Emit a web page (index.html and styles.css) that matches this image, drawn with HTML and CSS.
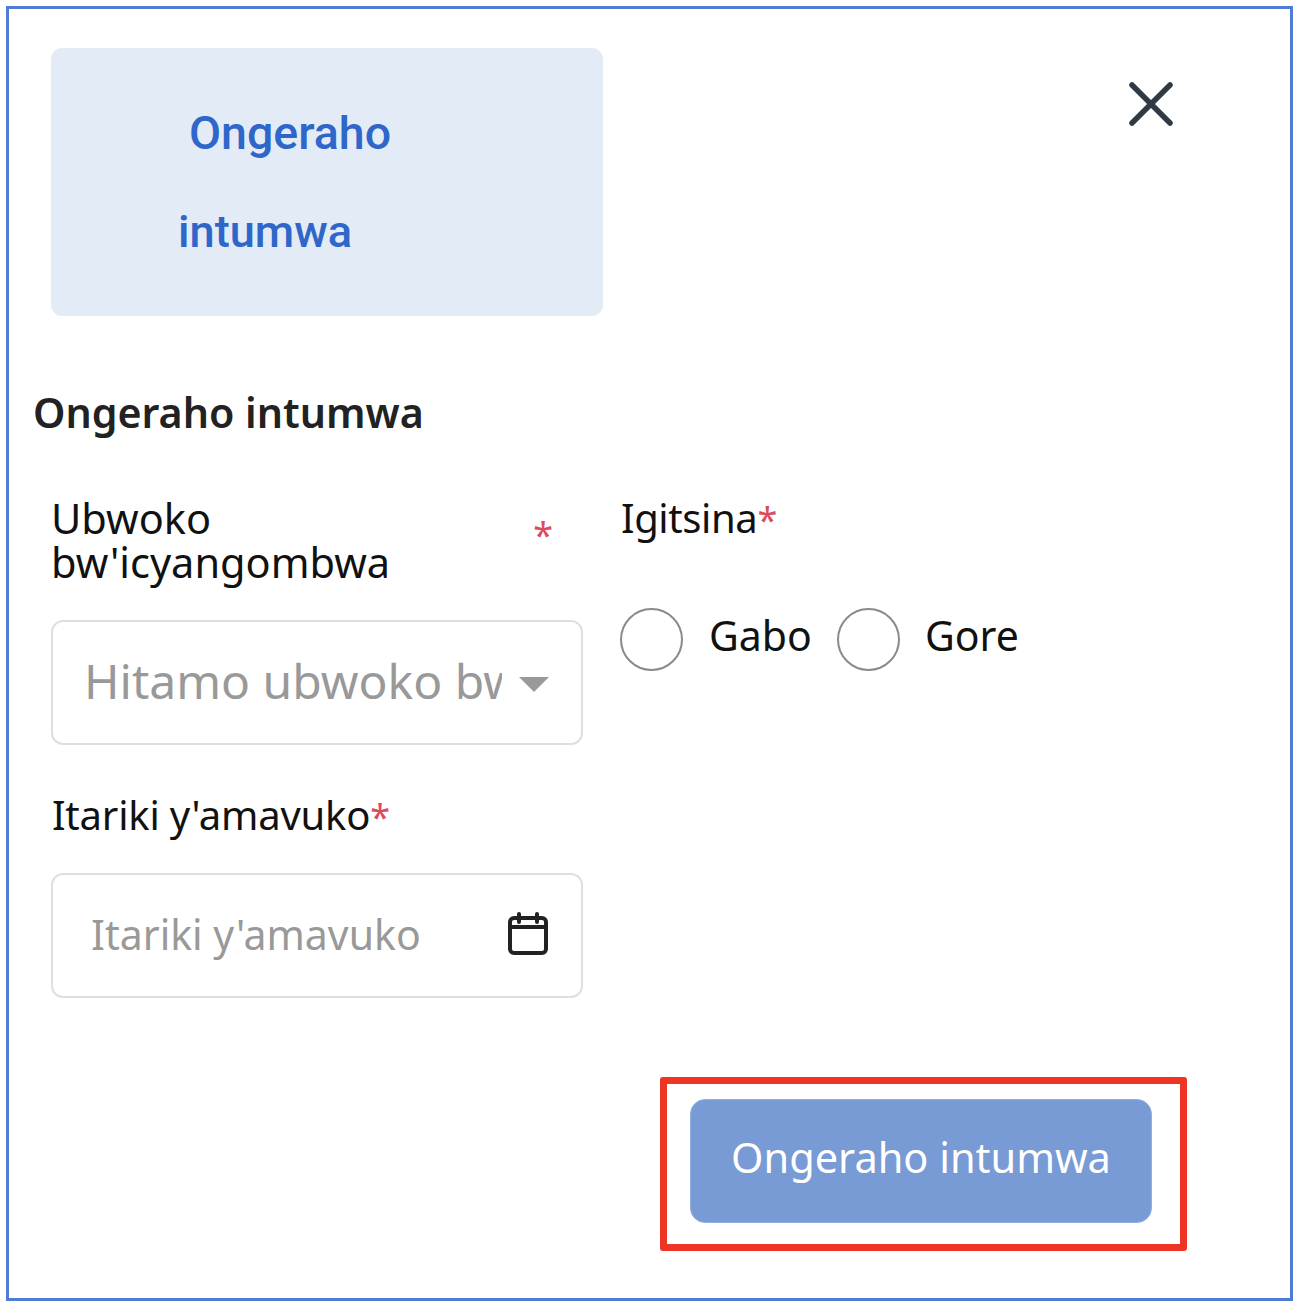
FILE: index.html
```html
<!DOCTYPE html>
<html lang="en">
<head>
  <meta charset="UTF-8" />
  <title>Ongeraho intumwa</title>
  <link rel="stylesheet" href="styles.css">
</head>
<body>
  <div class="frame">
    <div class="head">
      <div class="tab">
        <span class="tab-one">Ongeraho</span>
        <span class="tab-two">intumwa</span>
      </div>
      <svg class="close" width="46" height="44" viewBox="0 0 46 44" fill="none" stroke="#2f3a45" stroke-width="5.5" stroke-linecap="round">
        <path d="M4 3L42 41M42 3L4 41" />
      </svg>
    </div>

    <h2 class="title">Ongeraho intumwa</h2>

    <form class="fields">
      <div class="col-left">
        <div class="label label-split">
          <span>Ubwoko<br>bw'icyangombwa</span>
          <span class="star star-mid">*</span>
        </div>
        <div class="box select-box">
          <span class="select-text">Hitamo ubwoko bw</span>
          <span class="caret"></span>
        </div>

        <div class="label label-date">Itariki y'amavuko<span class="star">*</span></div>
        <div class="box date-box">
          <span class="date-text">Itariki y'amavuko</span>
          <svg class="calendar" width="42" height="44" viewBox="0 0 42 44" fill="none" stroke="#222" stroke-width="4" stroke-linecap="round" stroke-linejoin="round">
            <rect x="3" y="6" width="36" height="35" rx="4" />
            <path d="M3 15H39M12 2V10M30 2V10" />
          </svg>
        </div>
      </div>

      <div class="col-right">
        <div class="label label-gender">Igitsina<span class="star">*</span></div>
        <div class="radios">
          <span class="radio"></span><span class="radio-text">Gabo</span>
          <span class="radio"></span><span class="radio-text">Gore</span>
        </div>
      </div>
    </form>

    <div class="foot">
      <div class="mark">
        <button class="submit" type="button">Ongeraho intumwa</button>
      </div>
    </div>
  </div>
</body>
</html>
```

FILE: styles.css
```css
html, body { margin: 0; background: #fff; }
body { font-family: "Noto Sans", "Open Sans", sans-serif; color: #111; }

.frame {
  box-sizing: border-box;
  width: 1287px;
  height: 1295px;
  margin: 6px 0 0 6px;
  border: 3px solid #4f7cd4;
  padding: 39px 0 0 25px;
}

.head { display: flex; justify-content: space-between; align-items: flex-start; padding: 0 116px 0 17px; }
.tab {
  box-sizing: border-box;
  width: 552px;
  height: 268px;
  display: flex;
  flex-direction: column;
  gap: 49px;
  padding-top: 60px;
  background: #e3ebf6;
  border-radius: 11px;
  color: #2f66c9;
  font-family: Roboto, "Liberation Sans", sans-serif;
  font-weight: 500;
  line-height: 50px;
}
.tab-one { margin-left: 138px; font-size: 46.5px; }
.tab-two { margin-left: 127px; font-size: 45.2px; }
.close { margin-top: 34px; }

.title { margin: 70px 0 0 -1px; font-size: 41.2px; line-height: 52px; font-weight: 600; color: #222; }

.fields { display: flex; gap: 38px; margin-top: 58px; padding-left: 17px; }
.col-left { width: 532px; }
.col-right { flex: 1; }

.label { font-size: 40px; line-height: 44px; color: #111; }
.label-split { display: flex; justify-content: space-between; padding-right: 30px; font-size: 41.5px; }
.label-date { margin-top: 48px; margin-left: 1px; letter-spacing: -0.2px; }
.label-gender { letter-spacing: -0.4px; }
.star { color: #dc4a5e; font-size: 36px; line-height: 0; }
.star-mid { align-self: center; margin-top: -10px; line-height: 44px; }

.box {
  box-sizing: border-box;
  height: 125px;
  display: flex;
  align-items: center;
  border: 2px solid #dcdfe3;
  border-radius: 12px;
  background: #fff;
}
.select-box { margin-top: 36px; padding: 0 32px 0 31px; }
.select-text {
  width: 420px;
  overflow: hidden;
  white-space: nowrap;
  font-size: 48px;
  color: #999;
  margin-bottom: 4px;
}
.caret {
  margin-left: 17px;
  border-left: 15px solid transparent;
  border-right: 15px solid transparent;
  border-top: 15px solid #999;
  margin-top: 3px;
}
.date-box { margin-top: 36px; justify-content: space-between; padding: 0 32px 0 38px; }
.date-text { font-size: 41px; color: #999; margin-bottom: 4px; }
.calendar { margin-bottom: 4px; }

.radios { display: flex; align-items: center; margin-top: 67px; margin-left: -1px; }
.radio {
  box-sizing: border-box;
  width: 63px;
  height: 63px;
  border: 2px solid #8a8a8a;
  border-radius: 50%;
}
.radio-text { font-size: 41px; margin: 0 25px 8px 26px; }
.radio-text:last-child { margin-left: 25px; }

.foot { display: flex; justify-content: flex-end; padding-right: 103px; margin-top: 79px; }
.mark {
  padding: 15px 28px 21px 23px;
  border: 7px solid #ee3524;
  border-radius: 3px;
}
.submit {
  display: block;
  width: 462px;
  height: 124px;
  padding: 0 0 8px;
  border: 1px solid #8fb0e6;
  border-radius: 15px;
  background: #789bd6;
  color: #fff;
  font-family: inherit;
  font-size: 41.5px;
}
```
